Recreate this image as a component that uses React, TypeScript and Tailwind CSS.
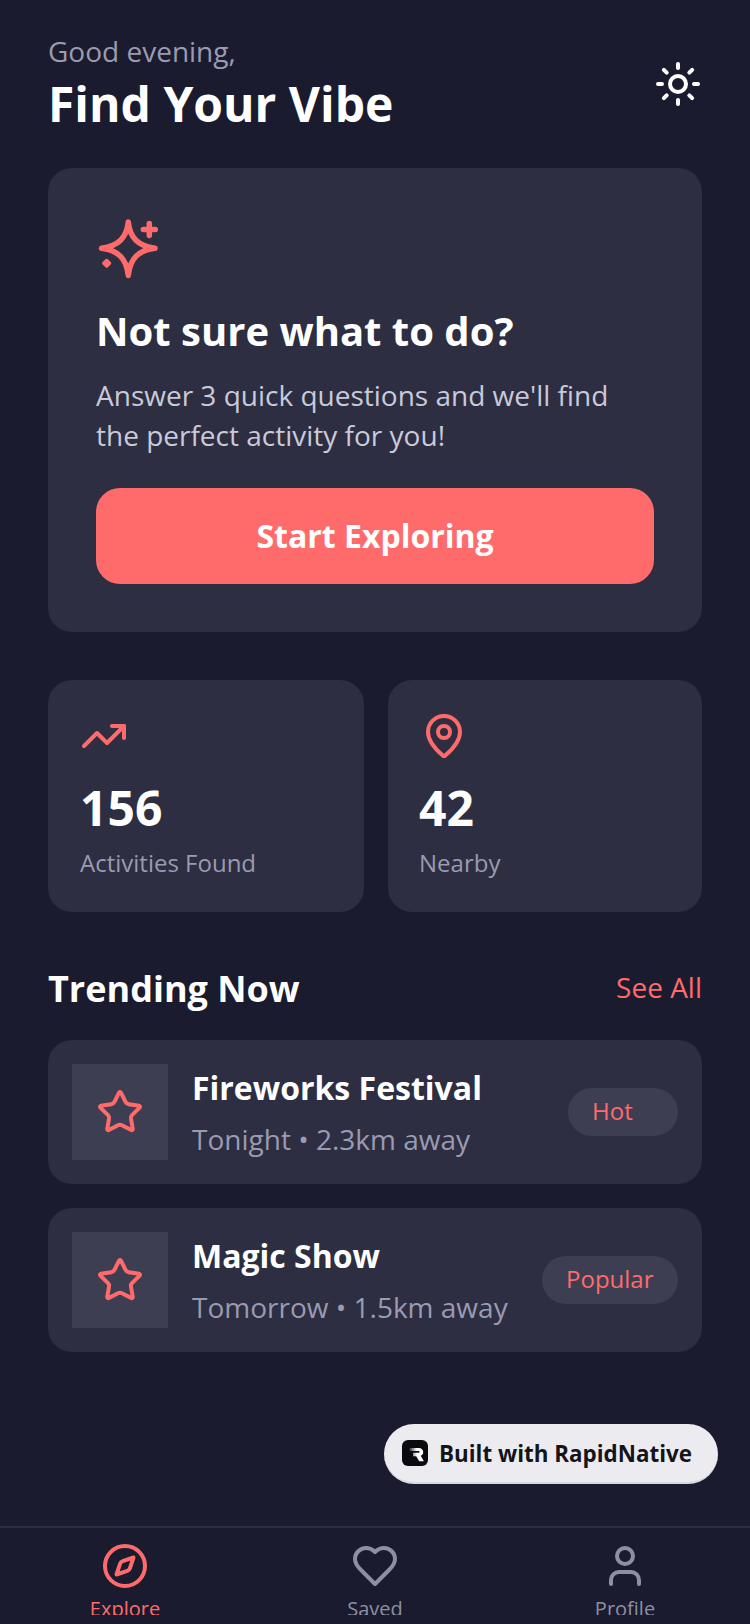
import { Compass, MapPin, Star, Sun, TrendingUp, User } from "lucide-react";

const trending = [
  { title: "Fireworks Festival", meta: "Tonight • 2.3km away", tag: "Hot" , tagClass: "w-[110px]" },
  { title: "Magic Show", meta: "Tomorrow • 1.5km away", tag: "Popular", tagClass: "w-[136px]" },
];

function SparkleIcon() {
  return (
    <svg width="64" height="64" viewBox="0 0 64 64" fill="none" stroke="#ff6b6b" strokeWidth="5.5" strokeLinecap="round" strokeLinejoin="round">
      <path d="M32.3 6C34 22 42 30 59 32.3 42 34.5 34 42.5 32.3 59.5 30.5 42.5 22.5 34.5 5.5 32.3 22.5 30 30.5 22 32.3 6Z" />
      <path d="M53.3 7.5v12M47.3 13.4h12" />
      <path d="M10.7 44.5l2.8 2.8-2.8 2.8-2.8-2.8Z" fill="#ff6b6b" strokeWidth="3.5" />
    </svg>
  );
}

function HeartIcon() {
  return (
    <svg width="48" height="48" viewBox="0 0 24 24" fill="none" stroke="currentColor" strokeWidth="2" strokeLinecap="round" strokeLinejoin="round" className="shrink-0">
      <path d="M19 14c1.49-1.46 3-3.21 3-5.5A5.5 5.5 0 0 0 16.5 3c-1.76 0-3 .5-4.5 2-1.5-1.5-2.74-2-4.5-2A5.5 5.5 0 0 0 2 8.5c0 2.3 1.5 4.05 3 5.5l7 7Z" />
    </svg>
  );
}

function RapidLogo() {
  return (
    <svg width="26" height="26" viewBox="0 0 26 26">
      <defs>
        <linearGradient id="logoFade" x1="0" x2="1" y1="0" y2="0">
          <stop offset="0" stopColor="#fff" stopOpacity="0.15" />
          <stop offset="0.5" stopColor="#fff" />
        </linearGradient>
      </defs>
      <rect width="26" height="26" rx="6" fill="#0b0b0f" />
      <path d="M7.5 8h9.5a4.2 4.2 0 0 1 4.2 4.2c0 1.7-1 3-2.5 3.6l3.2 5.4h-4.7l-3-5h-3.2l0-3.4h5.6a.9.9 0 0 0 0-1.8H7.5Z" fill="url(#logoFade)" />
    </svg>
  );
}

const tabs = [
  { label: "Explore", icon: <Compass size={48} className="shrink-0" />, active: true },
  { label: "Saved", icon: <HeartIcon />, active: false },
  { label: "Profile", icon: <User size={48} className="shrink-0" />, active: false },
];

export default function App() {
  return (
    <div className="relative flex h-[1624px] w-[750px] flex-col overflow-hidden bg-[#1a1b2e] font-['Open_Sans',sans-serif]">
      <main className="flex-1 px-12 pt-[31px]">
        <header className="flex items-center justify-between">
          <div>
            <p className="text-[28px] leading-[40px] text-[#9a9bb0]">Good evening,</p>
            <h1 className="mt-px text-[48px] leading-[64px] font-bold text-white">Find Your Vibe</h1>
          </div>
          <Sun size={48} className="text-white" />
        </header>

        <section className="mt-[32px] rounded-3xl bg-[#2d2e42] p-12">
          <SparkleIcon />
          <h2 className="mt-[23px] text-[40px] leading-[56px] font-bold text-white">Not sure what to do?</h2>
          <p className="mt-4 text-[28px] leading-[40px] text-[#c9cad8]">
            Answer 3 quick questions and we'll find the perfect activity for you!
          </p>
          <button className="mt-[33px] h-24 w-full rounded-3xl bg-[#ff6b6b] text-[32px] font-bold text-white">
            Start Exploring
          </button>
        </section>

        <section className="mt-12 flex gap-6">
          <div className="w-[316px] rounded-3xl bg-[#2d2e42] p-8">
            <TrendingUp size={48} className="text-[#ff6b6b]" />
            <p className="mt-4 text-[48px] leading-[64px] font-bold text-white">156</p>
            <p className="mt-[6px] text-[24px] leading-[34px] text-[#9a9bb0]">Activities Found</p>
          </div>
          <div className="flex-1 rounded-3xl bg-[#2d2e42] p-8">
            <MapPin size={48} className="text-[#ff6b6b]" />
            <p className="mt-4 -ml-px text-[48px] leading-[64px] font-bold text-white">42</p>
            <p className="mt-[6px] -ml-px text-[24px] leading-[34px] text-[#9a9bb0]">Nearby</p>
          </div>
        </section>

        <section className="mt-[51px]">
          <div className="flex items-center justify-between">
            <h2 className="text-[36px] leading-[52px] font-bold text-white">Trending Now</h2>
            <span className="mb-1 text-[28px] leading-[40px] text-[#ff6b6b]">See All</span>
          </div>
          <div className="mt-[25px] flex flex-col gap-6">
            {trending.map((item) => (
              <div key={item.title} className="flex items-center rounded-3xl bg-[#2d2e42] p-6">
                <div className="flex h-24 w-24 items-center justify-center bg-[#3d3e52]">
                  <Star size={48} className="text-[#ff6b6b]" />
                </div>
                <div className="ml-6 flex-1 pt-px">
                  <h3 className="text-[32px] leading-[44px] font-bold text-white">{item.title}</h3>
                  <p className="mt-[9px] text-[28px] leading-[40px] text-[#9a9bb0]">{item.meta}</p>
                </div>
                <span className={`flex h-12 items-center rounded-full bg-[#3d3e52] pb-[2px] pl-6 text-[24px] text-[#ff6b6b] ${item.tagClass}`}>
                  {item.tag}
                </span>
              </div>
            ))}
          </div>
        </section>
      </main>

      <div className="absolute top-[1424px] left-[384px] flex h-[60px] w-[334px] items-center gap-[11px] rounded-full border-b-2 border-[#d9d9e0] bg-[#ececf0] pl-[18px]">
        <RapidLogo />
        <span className="pt-[2px] text-[22.4px] font-bold text-[#14141a]">Built with RapidNative</span>
      </div>

      <nav className="mb-[9px] flex h-[89px] shrink-0 overflow-hidden border-t-2 border-[#2d2e42] pt-[14px]">
        {tabs.map(({ label, icon, active }) => (
          <div key={label} className={`flex flex-1 flex-col items-center ${active ? "text-[#ff6b6b]" : "text-[#8e8fa3]"}`}>
            {icon}
            <span className="mt-[5px] shrink-0 text-[20px] leading-[28px]">{label}</span>
          </div>
        ))}
      </nav>
    </div>
  );
}
